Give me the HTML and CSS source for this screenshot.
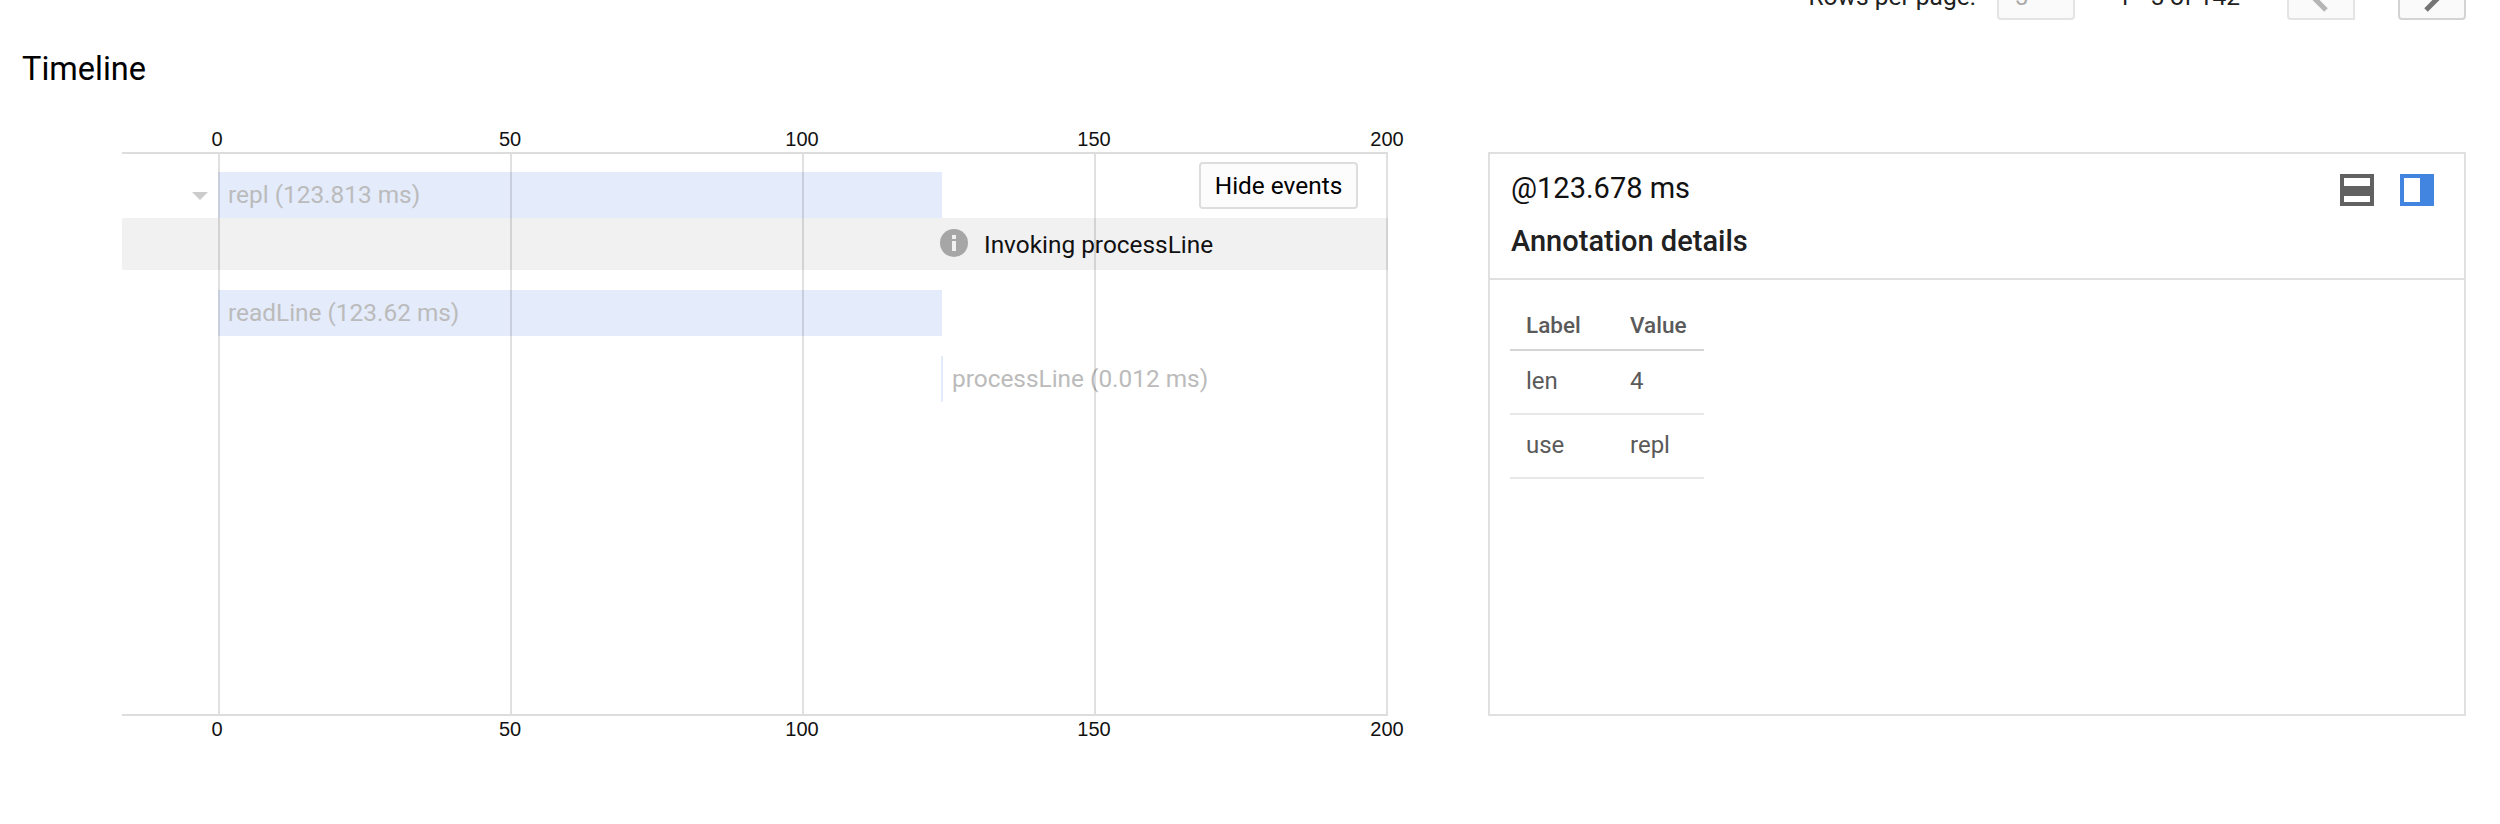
FILE: index.html
```html
<!DOCTYPE html>
<html lang="en">
<head>
    <meta charset="UTF-8">
    <title>Timeline</title>
    <link rel="stylesheet" href="styles.css">
</head>
<body>
    <div class="pager">
        <span class="pager-label">Rows per page:</span>
        <div class="pager-select"><span>5</span></div>
        <span class="pager-range">1 - 5 of 142</span>
        <button class="pager-btn pager-prev">
            <svg width="64" height="60" viewBox="0 0 64 60"><path d="M37 52 L19 34 L37 16" class="chev-off"/></svg>
        </button>
        <button class="pager-btn pager-next">
            <svg width="64" height="60" viewBox="0 0 64 60"><path d="M26 52 L44 34 L26 16" class="chev-on"/></svg>
        </button>
    </div>

    <h1 class="title">Timeline</h1>

    <div class="main">
        <div class="chart">
            <div class="axis axis-top">
                <span class="tick t0">0</span>
                <span class="tick t50">50</span>
                <span class="tick t100">100</span>
                <span class="tick t150">150</span>
                <span class="tick t200">200</span>
            </div>
            <div class="plot">
                <div class="row row-repl">
                    <span class="caret"></span>
                    <div class="bar">repl (123.813 ms)</div>
                </div>
                <div class="event">
                    <svg class="info" width="28" height="28" viewBox="0 0 28 28">
                        <circle cx="14" cy="14" r="14" fill="#a6a6a6"/>
                        <rect x="12" y="12" width="4" height="10" fill="#f1f1f1"/>
                        <rect x="12" y="6" width="4" height="4" fill="#f1f1f1"/>
                    </svg>
                    <span>Invoking processLine</span>
                </div>
                <div class="row row-gap">
                    <div class="bar">readLine (123.62 ms)</div>
                </div>
                <div class="row row-gap">
                    <div class="bar bar-thin"></div>
                    <span class="bar-label">processLine (0.012 ms)</span>
                </div>
                <i class="grid g0"></i>
                <i class="grid g50"></i>
                <i class="grid g100"></i>
                <i class="grid g150"></i>
                <i class="grid g200"></i>
                <button class="hide-btn">Hide events</button>
            </div>
            <div class="axis axis-bottom">
                <span class="tick t0">0</span>
                <span class="tick t50">50</span>
                <span class="tick t100">100</span>
                <span class="tick t150">150</span>
                <span class="tick t200">200</span>
            </div>
        </div>

        <div class="panel">
            <div class="panel-head">
                <div class="panel-titles">
                    <div class="panel-time">@123.678 ms</div>
                    <div class="panel-name">Annotation details</div>
                </div>
                <div class="panel-icons">
                    <svg width="34" height="32" viewBox="0 0 34 32">
                        <rect width="34" height="32" fill="#616161"/>
                        <rect x="4" y="4" width="26" height="8" fill="#fff"/>
                        <rect x="4" y="22" width="26" height="6" fill="#fff"/>
                    </svg>
                    <svg width="34" height="32" viewBox="0 0 34 32">
                        <rect width="34" height="32" fill="#4285e0"/>
                        <rect x="4" y="4" width="16" height="24" fill="#fff"/>
                    </svg>
                </div>
            </div>
            <table class="details">
                <thead>
                    <tr><th>Label</th><th>Value</th></tr>
                </thead>
                <tbody>
                    <tr><td>len</td><td>4</td></tr>
                    <tr><td>use</td><td>repl</td></tr>
                </tbody>
            </table>
        </div>
    </div>
</body>
</html>
```

FILE: styles.css
```css
body {
    margin: 0;
    font-family: Roboto, "Liberation Sans", sans-serif;
    background-color: #fff;
    color: #000;
    overflow: hidden;
}

/* pager, cut off by the top of the window */
.pager {
    height: 20px;
    display: flex;
    justify-content: flex-end;
    align-items: flex-end;
    padding-right: 34px;
    overflow: hidden;
}
.pager-label {
    font-size: 24.5px;
    line-height: 30px;
    margin-bottom: 8px;
    color: #212121;
}
.pager-select {
    width: 78px;
    height: 64px;
    margin-left: 21px;
    border: 2px solid #e4e4e4;
    border-radius: 4px;
    background-color: #fafafa;
    box-sizing: border-box;
    flex: none;
    display: flex;
    align-items: flex-end;
    font-size: 24px;
    line-height: 30px;
    color: #aaa;
    padding: 0 0 6px 16px;
}
.pager-range {
    font-size: 24.5px;
    line-height: 30px;
    margin-left: 43px;
    margin-bottom: 8px;
    color: #212121;
}
.pager-btn {
    width: 68px;
    height: 64px;
    padding: 0;
    background-color: #fafafa;
    border: 2px solid #e4e4e4;
    border-radius: 4px;
    box-sizing: border-box;
    flex: none;
    display: block;
}
.pager-prev {
    margin-left: 47px;
    border-radius: 4px 0 0 4px;
}
.pager-next {
    margin-left: 43px;
    border-color: #d4d4d4;
}
.pager-btn svg {
    display: block;
}
.chev-off, .chev-on {
    fill: none;
    stroke-width: 5;
}
.chev-off {
    stroke: #b5b5b5;
}
.chev-on {
    stroke: #757575;
}

.title {
    margin: 23px 0 0 22px;
    font-size: 32.5px;
    font-weight: 400;
    line-height: 52px;
}

.main {
    display: flex;
    gap: 100px;
    margin-top: 25px;
    padding-left: 122px;
}

/* chart */
.chart {
    width: 1266px;
    flex: none;
}
.axis {
    position: relative;
    height: 32px;
    font-family: "Liberation Sans", Arial, sans-serif;
    font-size: 20px;
    color: #111;
}
.tick {
    position: absolute;
    transform: translateX(-50%);
    line-height: 24px;
}
.axis-top .tick {
    top: 7px;
}
.axis-bottom .tick {
    top: 1px;
}
.t0 { left: 95px; }
.t50 { left: 388px; }
.t100 { left: 680px; }
.t150 { left: 972px; }
.t200 { left: 1265px; }
.g0 { left: 96px; }
.g50 { left: 388px; }
.g100 { left: 680px; }
.g150 { left: 972px; }
.g200 { left: 1264px; }

.plot {
    position: relative;
    height: 542px;
    border-top: 2px solid #ddd;
    border-bottom: 2px solid #ddd;
    padding-top: 18px;
    font-size: 24.4px;
}
.grid {
    position: absolute;
    top: 0;
    bottom: 0;
    width: 2px;
    background-color: rgba(0, 0, 0, 0.12);
}
.row {
    position: relative;
    height: 46px;
    display: flex;
    color: #bbb;
}
.row-gap {
    margin-top: 20px;
}
.bar {
    margin-left: 96px;
    width: 724px;
    padding-left: 10px;
    box-sizing: border-box;
    background-color: #e4ebfb;
    line-height: 45px;
    white-space: nowrap;
}
.bar-thin {
    margin-left: 819px;
    width: 2px;
    padding: 0;
}
.bar-label {
    margin-left: 9px;
    line-height: 46px;
    white-space: nowrap;
}
.caret {
    position: absolute;
    left: 70px;
    top: 20px;
    width: 0;
    height: 0;
    border-left: 8px solid transparent;
    border-right: 8px solid transparent;
    border-top: 8px solid #ccc;
}
.event {
    height: 52px;
    padding-left: 818px;
    background-color: #f1f1f1;
    display: flex;
    align-items: center;
    color: #111;
    white-space: nowrap;
}
.info {
    margin-right: 16px;
    margin-top: -2px;
}
.hide-btn {
    position: absolute;
    top: 8px;
    right: 30px;
    width: 159px;
    height: 47px;
    padding: 0;
    font-family: inherit;
    font-size: 24.4px;
    color: #000;
    background-color: #fcfcfc;
    border: 2px solid #ddd;
    border-radius: 4px;
}

/* details panel */
.panel {
    width: 978px;
    height: 564px;
    box-sizing: border-box;
    border: 2px solid #e0e0e0;
    margin-top: 32px;
    flex: none;
}
.panel-head {
    height: 124px;
    border-bottom: 2px solid #e0e0e0;
    display: flex;
    justify-content: space-between;
    padding: 0 30px 0 21px;
}
.panel-time {
    font-size: 29px;
    line-height: 34px;
    margin-top: 17px;
    color: #111;
}
.panel-name {
    font-size: 29px;
    font-weight: 500;
    line-height: 34px;
    margin-top: 19px;
    color: #212121;
}
.panel-icons {
    display: flex;
    gap: 26px;
    padding-top: 20px;
}
.details {
    border-collapse: collapse;
    margin: 16px 0 0 20px;
    width: 194px;
    font-size: 24px;
    color: #5a5a5a;
}
.details th {
    font-size: 22.5px;
    font-weight: 500;
    text-align: left;
    height: 30px;
    padding: 14px 0 9px 16px;
    line-height: 30px;
    border-bottom: 2px solid #d5d5d5;
}
.details td {
    height: 60px;
    padding: 0 0 2px 16px;
    border-bottom: 2px solid #e8e8e8;
}
.details th:first-child, .details td:first-child {
    width: 88px;
}
```
